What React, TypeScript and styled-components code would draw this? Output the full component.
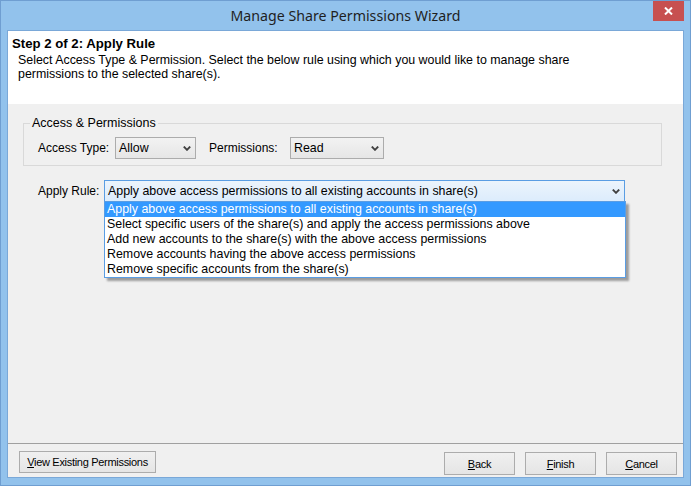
import React from "react";
import styled, { createGlobalStyle } from "styled-components";

const GlobalStyle = createGlobalStyle`
  html, body { margin: 0; padding: 0; background: #92c2ec; }
  body { font-family: "Liberation Sans", Arial, sans-serif; }
  * { box-sizing: border-box; }
`;

const Window = styled.div`
  width: 691px;
  height: 486px;
  background: #92c2ec;
  border: 1px solid #6f9ed1;
  padding: 0 6px 7px 6px;
  display: flex;
  flex-direction: column;
`;

const TitleBar = styled.div`
  height: 29px;
  display: grid;
  grid-template-columns: 1fr auto 1fr;
  align-items: start;
`;

const TitleText = styled.div`
  grid-column: 2;
  font-family: "Noto Sans", "Open Sans", sans-serif;
  font-size: 14.2px;
  line-height: 30px;
  color: #1f1f1f;
  white-space: nowrap;
`;

const CloseButton = styled.div`
  grid-column: 3;
  justify-self: end;
  width: 31px;
  height: 20px;
  background: #c75050;
  display: flex;
  align-items: center;
  justify-content: center;
`;

const Content = styled.div`
  flex: 1;
  border: 1px solid #7aa8d8;
  background: #f0f0f0;
  display: flex;
  flex-direction: column;
`;

const Header = styled.div`
  height: 73px;
  background: #ffffff;
  padding: 5px 0 0 4px;
`;

const StepTitle = styled.div`
  font-size: 13.2px;
  font-weight: bold;
  line-height: 15px;
  color: #000;
`;

const Description = styled.div`
  margin-top: 2px;
  padding-left: 6px;
  font-size: 12.4px;
  line-height: 14px;
  color: #000;
`;

const Body = styled.div`
  flex: 1;
  padding: 12px 21px 0 15px;
`;

const GroupBox = styled.fieldset`
  margin: 0;
  padding: 0 0 6px 14px;
  border: 1px solid #d9d9d9;
`;

const Legend = styled.legend`
  font-size: 12.5px;
  line-height: 15px;
  padding: 0 2px;
  margin-left: -8px;
  color: #000;
`;

const Row = styled.div<{ $top: number; $left?: number }>`
  display: flex;
  align-items: center;
  margin-top: ${(p) => p.$top}px;
  padding-left: ${(p) => p.$left ?? 0}px;
`;

const Label = styled.span<{ $w: number }>`
  width: ${(p) => p.$w}px;
  flex: none;
  font-size: 12px;
  color: #000;
  white-space: nowrap;
`;

const SelectBox = styled.div<{ $w: number }>`
  width: ${(p) => p.$w}px;
  height: 22px;
  flex: none;
  margin-right: 13px;
  border: 1px solid #acacac;
  background: linear-gradient(#f2f2f2, #e6e6e6);
  display: flex;
  align-items: center;
  justify-content: space-between;
  padding: 0 4px 0 3px;
  font-size: 12.4px;
  color: #000;
`;

const Combo = styled.div`
  position: relative;
  width: 521px;
  height: 22px;
  border: 1px solid #5a9de3;
  background: linear-gradient(#ecf4fc, #dcecfc);
  display: flex;
  align-items: center;
  justify-content: space-between;
  padding: 0 4px 0 3px;
  font-size: 12.4px;
  color: #000;
`;

const DropList = styled.div`
  position: absolute;
  top: 100%;
  left: -1px;
  width: 522px;
  border: 1px solid #5a9de3;
  background: #ffffff;
  box-shadow: 3px 3px 2px rgba(0, 0, 0, 0.35);
  z-index: 2;
`;

const DropItem = styled.div<{ $active?: boolean }>`
  height: 15px;
  line-height: 15px;
  padding-left: 2px;
  font-size: 12.4px;
  white-space: nowrap;
  background: ${(p) => (p.$active ? "#3399ff" : "transparent")};
  color: ${(p) => (p.$active ? "#ffffff" : "#000000")};
`;

const Footer = styled.div`
  height: 34px;
  border-top: 1px solid #a0a0a0;
  padding: 7px 6px 0 11px;
  display: flex;
  align-items: flex-start;
  justify-content: space-between;
`;

const ButtonGroup = styled.div`
  display: flex;
  gap: 10px;
  padding-top: 1px;
`;

const Button = styled.div<{ $w: number; $h: number }>`
  width: ${(p) => p.$w}px;
  height: ${(p) => p.$h}px;
  border: 1px solid #acacac;
  background: linear-gradient(#f0f0f0, #e5e5e5);
  display: flex;
  align-items: center;
  justify-content: center;
  font-size: 11px;
  letter-spacing: -0.3px;
  color: #000;
  white-space: nowrap;
  u { text-decoration: underline; text-underline-offset: 1px; }
`;

const Chevron = () => (
  <svg width="8" height="5" viewBox="0 0 8 5">
    <polyline points="0.8,0.6 4,3.8 7.2,0.6" fill="none" stroke="#404040" strokeWidth="1.9" />
  </svg>
);

const CloseX = () => (
  <svg width="9" height="8" viewBox="0 0 9 8">
    <path d="M1 0.5 L8 7.5 M8 0.5 L1 7.5" stroke="#ffffff" strokeWidth="2" />
  </svg>
);

const rules = [
  "Apply above access permissions to all existing accounts in share(s)",
  "Select specific users of the share(s) and apply the access permissions above",
  "Add new accounts to the share(s) with the above access permissions",
  "Remove accounts having the above access permissions",
  "Remove specific accounts from the share(s)",
];

export default function App() {
  return (
    <>
      <GlobalStyle />
      <Window>
        <TitleBar>
          <TitleText>Manage Share Permissions Wizard</TitleText>
          <CloseButton>
            <CloseX />
          </CloseButton>
        </TitleBar>
        <Content>
          <Header>
            <StepTitle>Step 2 of 2: Apply Rule</StepTitle>
            <Description>
              Select Access Type &amp; Permission. Select the below rule using which you would like to manage share
              <br />
              permissions to the selected share(s).
            </Description>
          </Header>
          <Body>
            <GroupBox>
              <Legend>Access &amp; Permissions</Legend>
              <Row $top={6}>
                <Label $w={77}>Access Type:</Label>
                <SelectBox $w={81}>
                  <span>Allow</span>
                  <Chevron />
                </SelectBox>
                <Label $w={81}>Permissions:</Label>
                <SelectBox $w={94}>
                  <span>Read</span>
                  <Chevron />
                </SelectBox>
              </Row>
            </GroupBox>
            <Row $top={14} $left={15}>
              <Label $w={66}>Apply Rule:</Label>
              <Combo>
                <span>{rules[0]}</span>
                <Chevron />
                <DropList>
                  {rules.map((r, i) => (
                    <DropItem key={r} $active={i === 0}>
                      {r}
                    </DropItem>
                  ))}
                </DropList>
              </Combo>
            </Row>
          </Body>
          <Footer>
            <Button $w={137} $h={22}>
              <span>
                <u>V</u>iew Existing Permissions
              </span>
            </Button>
            <ButtonGroup>
              <Button $w={71} $h={23}>
                <span>
                  <u>B</u>ack
                </span>
              </Button>
              <Button $w={71} $h={23}>
                <span>
                  <u>F</u>inish
                </span>
              </Button>
              <Button $w={71} $h={23}>
                <span>
                  <u>C</u>ancel
                </span>
              </Button>
            </ButtonGroup>
          </Footer>
        </Content>
      </Window>
    </>
  );
}
